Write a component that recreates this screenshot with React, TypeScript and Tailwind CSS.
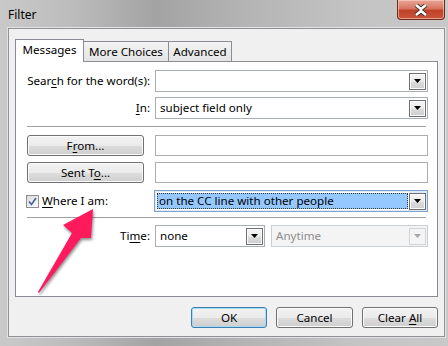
import React from 'react';

function DropArrow({ disabled }: { disabled?: boolean }) {
  return (
    <svg width="7" height="4" viewBox="0 0 7 4">
      <path d="M0 0 H7 L3.5 4 Z" fill={disabled ? '#a8a8a8' : '#000'} />
    </svg>
  );
}

function DropButton({ disabled }: { disabled?: boolean }) {
  return (
    <div
      className={
        disabled
          ? 'w-[17px] h-[17px] flex items-center justify-center border border-[#d0d4d9] bg-[#f4f4f4]'
          : 'w-[17px] h-[17px] flex items-center justify-center border border-[#707070] bg-[linear-gradient(#f6f6f6_0%,#e9e9e9_50%,#dcdcdc_51%,#cfcfcf_100%)] shadow-[inset_0_0_0_1px_#fafafa]'
      }
    >
      <DropArrow disabled={disabled} />
    </div>
  );
}

function Combo({ text, disabled }: { text?: string; disabled?: boolean }) {
  return (
    <div
      className={
        disabled
          ? 'h-full flex items-center border border-[#c9ced6] bg-[#f4f4f4] p-[1px] pl-[4px]'
          : 'h-full flex items-center border border-[#a9adb4] bg-white p-[1px] pl-[4px]'
      }
    >
      <span className={disabled ? 'flex-1 text-[#8d8d8d]' : 'flex-1'}>{text}</span>
      <DropButton disabled={disabled} />
    </div>
  );
}

function Btn({ children, width, isDefault }: { children: React.ReactNode; width: string; isDefault?: boolean }) {
  return (
    <div
      className={`${width} h-full flex items-center justify-center rounded-[3px] border ${
        isDefault ? 'border-[#3c7fb1] shadow-[inset_0_0_0_1px_#a6dbf8]' : 'border-[#707070] shadow-[inset_0_0_0_1px_#fbfbfb]'
      } bg-[linear-gradient(#f2f2f2_0%,#ebebeb_50%,#dddddd_51%,#cfcfcf_100%)]`}
    >
      <span className="whitespace-nowrap">{children}</span>
    </div>
  );
}

function U({ children }: { children: React.ReactNode }) {
  return <span className="underline underline-offset-[2px] decoration-1">{children}</span>;
}

function Label({ children }: { children: React.ReactNode }) {
  return (
    <div className="w-[123px] flex items-center justify-end">
      <span className="whitespace-nowrap">{children}</span>
    </div>
  );
}

export default function App() {
  return (
    <div className="relative w-[448px] h-[346px] overflow-hidden bg-[linear-gradient(90deg,#c9c9c9_0%,#bdbdbd_15%,#a3a3a3_35%,#b4b4b4_55%,#c4c4c4_80%,#c8c8c8_100%)] font-['Noto_Sans',sans-serif] text-[11.6px] text-black leading-none">
      {/* Title bar */}
      <div className="h-[28px] flex items-start justify-between">
        <span className="pl-[8px] pt-[9px] text-[12px]">Filter</span>
        <div className="mr-[3px] w-[48px] h-[20px] rounded-b-[4px] border border-t-0 border-[#6e2a1f] bg-[linear-gradient(#e6a698_0%,#d9755f_45%,#c1412a_55%,#c9553a_100%)] shadow-[inset_0_0_0_1px_rgba(255,210,200,0.6)] flex items-center justify-center">
          <svg width="16" height="12" viewBox="0 0 16 12">
            <path d="M3 1 L8 5 L13 1 M3 11 L8 7 L13 11" stroke="#3a2a28" strokeWidth="4.4" fill="none" />
            <path d="M3 1 L8 5 L13 1 M3 11 L8 7 L13 11" stroke="#ffffff" strokeWidth="2.6" fill="none" />
          </svg>
        </div>
      </div>

      {/* Client area */}
      <div className="ml-[8px] w-[437px] h-[309px] border border-[#8e9297] bg-[#f0f0f0] shadow-[0_0_0_1px_#e2e2e2] flex flex-col px-[6px] pt-[10px]">
        {/* Tabs */}
        <div className="flex items-end h-[22px]">
          <div className="relative z-10 w-[69px] h-[23px] -mb-px flex items-center justify-center pb-[2px] border border-b-0 border-[#898c95] bg-white">
            Messages
          </div>
          <div className="-ml-px w-[86px] h-[20px] flex items-center justify-center border border-b-0 border-[#898c95] bg-[linear-gradient(#f3f3f3,#e4e4e4)]">
            More Choices
          </div>
          <div className="-ml-px w-[64px] h-[20px] flex items-center justify-center border border-b-0 border-[#898c95] bg-[linear-gradient(#f3f3f3,#e4e4e4)]">
            Advanced
          </div>
        </div>

        {/* Panel */}
        <div className="h-[236px] border border-[#898c95] bg-white flex flex-col pl-[11px] pr-[9px] pt-[8px]">
          <div className="h-[22px] flex gap-[5px] items-stretch">
            <Label>
              Sear<U>c</U>h for the word(s):
            </Label>
            <div className="flex-1">
              <Combo />
            </div>
          </div>

          <div className="mt-[5px] h-[22px] flex gap-[5px] items-stretch">
            <Label>
              <U>I</U>n:
            </Label>
            <div className="flex-1">
              <Combo text="subject field only" />
            </div>
          </div>

          <div className="mt-[7px] mr-[2px] h-px bg-[#a0a0a0]" />

          <div className="mt-[8px] h-[21px] flex gap-[5px] items-stretch">
            <div className="w-[123px]">
              <Btn width="w-[117px]">
                F<U>r</U>om...
              </Btn>
            </div>
            <div className="flex-1 border border-[#abadb3] bg-white" />
          </div>

          <div className="mt-[6px] h-[21px] flex gap-[5px] items-stretch">
            <div className="w-[123px]">
              <Btn width="w-[117px]">
                Sent T<U>o</U>...
              </Btn>
            </div>
            <div className="flex-1 border border-[#abadb3] bg-white" />
          </div>

          <div className="mt-[7px] h-[22px] flex gap-[5px] items-stretch">
            <div className="w-[123px] flex items-center gap-[3px] -ml-[1px]">
              <div className="w-[13px] h-[13px] border border-[#8e8f8f] bg-[linear-gradient(135deg,#dcdcdc,#fbfbfb)] flex items-center justify-center">
                <svg width="9" height="9" viewBox="0 0 9 9">
                  <path d="M1 4.5 L3.5 7.5 L8 1" stroke="#4a5f97" strokeWidth="1.6" fill="none" />
                </svg>
              </div>
              <span className="whitespace-nowrap">
                <U>W</U>here I am:
              </span>
            </div>
            <div className="flex-1 flex items-center border border-[#7da2ce] bg-[#dfe9f5] p-[1px]">
              <div className="flex-1 h-full p-[1px] bg-white">
                <div className="h-full flex items-center pl-[2px] bg-[#94c8ff] outline-1 outline-dotted outline-[#333] -outline-offset-1">
                  on the CC line with other people
                </div>
              </div>
              <DropButton />
            </div>
          </div>

          <div className="mt-[5px] mr-[2px] h-px bg-[#a0a0a0]" />

          <div className="mt-[7px] h-[22px] flex gap-[5px] items-stretch">
            <Label>
              Ti<U>m</U>e:
            </Label>
            <div className="w-[110px]">
              <Combo text="none" />
            </div>
            <div className="flex-1 ml-[1px]">
              <Combo text="Anytime" disabled />
            </div>
          </div>
        </div>

        {/* Dialog buttons */}
        <div className="mt-[10px] h-[21px] flex justify-end gap-[9px]">
          <Btn width="w-[76px]" isDefault>
            OK
          </Btn>
          <Btn width="w-[77px]">Cancel</Btn>
          <Btn width="w-[76px]">
            Clear <U>A</U>ll
          </Btn>
        </div>
      </div>

      {/* Annotation arrow */}
      <svg className="absolute left-0 top-0 pointer-events-none" width="448" height="346" viewBox="0 0 448 346">
        <polygon
          points="38,292 72,233 63,225 93,209 91,238 81,238 39,293"
          fill="#ff1a5e"
          style={{ filter: 'drop-shadow(1px 2px 1.5px rgba(0,0,0,0.45))' }}
        />
      </svg>
    </div>
  );
}
